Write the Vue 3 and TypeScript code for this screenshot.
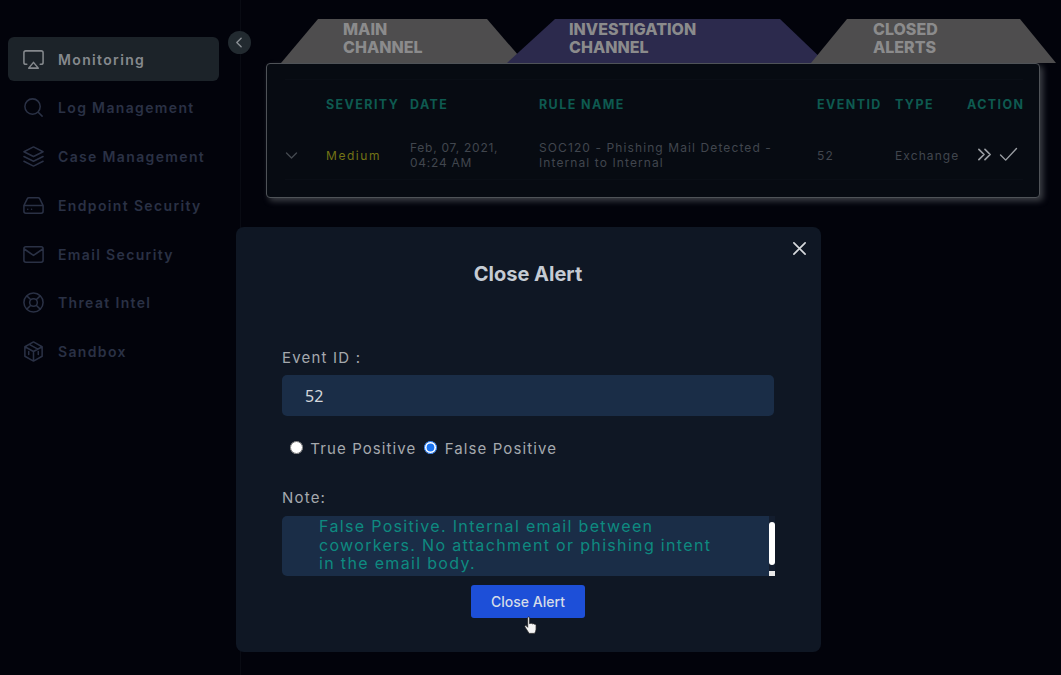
<script setup lang="ts">
interface NavItem {
  label: string;
  icon: string;
  active?: boolean;
}

// one path per icon, subpaths for the separate strokes
const navItems: NavItem[] = [
  {
    label: 'Monitoring',
    active: true,
    icon: 'M5 17H4a2 2 0 0 1-2-2V5a2 2 0 0 1 2-2h16a2 2 0 0 1 2 2v10a2 2 0 0 1-2 2h-1M12 15l5 6H7z',
  },
  { label: 'Log Management', icon: 'M11 3a8 8 0 1 0 0 16a8 8 0 1 0 0-16zM21 21l-4.35-4.35' },
  { label: 'Case Management', icon: 'M12 2L2 7l10 5l10-5zM2 17l10 5l10-5M2 12l10 5l10-5' },
  {
    label: 'Endpoint Security',
    icon: 'M22 12H2M5.45 5.11L2 12v6a2 2 0 0 0 2 2h16a2 2 0 0 0 2-2v-6l-3.45-6.89A2 2 0 0 0 16.76 4H7.24a2 2 0 0 0-1.79 1.11zM6 16h.01M10 16h.01',
  },
  {
    label: 'Email Security',
    icon: 'M4 4h16a2 2 0 0 1 2 2v12a2 2 0 0 1-2 2H4a2 2 0 0 1-2-2V6a2 2 0 0 1 2-2zM22 6l-10 7L2 6',
  },
  {
    label: 'Threat Intel',
    icon: 'M12 2a10 10 0 1 0 0 20a10 10 0 1 0 0-20zM12 8a4 4 0 1 0 0 8a4 4 0 1 0 0-8zM4.93 4.93l4.24 4.24M14.83 14.83l4.24 4.24M14.83 9.17l4.24-4.24M4.93 19.07l4.24-4.24',
  },
  {
    label: 'Sandbox',
    icon: 'M12 2l9 5v10l-9 5l-9-5V7zM3 7l9 5l9-5M12 12v10M7.5 4.5l9 5M7 12v3M17 12v3',
  },
];

const noteLines: string[] = [
  'False Positive. Internal email between',
  'coworkers. No attachment or phishing intent',
  'in the email body.',
];
</script>

<template>
  <div class="page">
    <aside class="sidebar">
      <a v-for="item in navItems" :key="item.label" class="nav-item" :class="{ active: item.active }">
        <svg class="nav-icon" viewBox="0 0 24 24" fill="none" stroke="currentColor" stroke-width="1.6" stroke-linecap="round" stroke-linejoin="round">
          <path :d="item.icon" />
        </svg>
        <span>{{ item.label }}</span>
      </a>
      <button class="collapse-btn" aria-label="Collapse">
        <svg viewBox="0 0 24 24" fill="none" stroke="currentColor" stroke-width="2.6" stroke-linecap="round" stroke-linejoin="round">
          <path d="M15 4l-8 8l8 8" />
        </svg>
      </button>
    </aside>

    <main class="content">
      <div class="tabs">
        <div class="tab tab-main"><span>MAIN<br />CHANNEL</span></div>
        <div class="tab tab-investigation"><span>INVESTIGATION<br />CHANNEL</span></div>
        <div class="tab tab-closed"><span>CLOSED<br />ALERTS</span></div>
      </div>

      <section class="panel">
        <div class="row head">
          <div></div>
          <div>SEVERITY</div>
          <div>DATE</div>
          <div>RULE NAME</div>
          <div>EVENTID</div>
          <div>TYPE</div>
          <div class="action-head">ACTION</div>
        </div>
        <div class="row body">
          <svg class="chevron" viewBox="0 0 24 24" fill="none" stroke="currentColor" stroke-width="2.2" stroke-linecap="round" stroke-linejoin="round">
            <path d="M4 8l8 8l8-8" />
          </svg>
          <div class="severity">Medium</div>
          <div class="date">Feb, 07, 2021,<br />04:24 AM</div>
          <div>SOC120 - Phishing Mail Detected -<br />Internal to Internal</div>
          <div>52</div>
          <div>Exchange</div>
          <div class="actions">
            <svg viewBox="0 0 16 16" fill="none" stroke="currentColor" stroke-width="1.8" stroke-linecap="round" stroke-linejoin="round" class="act-forward">
              <path d="M2 2.500l5.500 5.500L2 13.500M8.500 2.500L14 8l-5.500 5.500" />
            </svg>
            <svg viewBox="0 0 20 16" fill="none" stroke="currentColor" stroke-width="1.5" stroke-linecap="round" stroke-linejoin="round" class="act-check">
              <path d="M1.500 8.500L7 14L18.500 1.500" />
            </svg>
          </div>
        </div>
      </section>
    </main>

    <div class="modal">
      <button class="modal-close" aria-label="Close">
        <svg viewBox="0 0 16 16" fill="none" stroke="currentColor" stroke-width="1.8" stroke-linecap="round">
          <path d="M2 2l12 12M14 2L2 14" />
        </svg>
      </button>
      <h2 class="modal-title">Close Alert</h2>

      <label class="field-label">Event ID :</label>
      <input class="event-input" type="text" value="52" readonly />

      <div class="radios">
        <label><input type="radio" name="verdict" /> True Positive</label>
        <label><input type="radio" name="verdict" checked /> False Positive</label>
      </div>

      <label class="field-label note-label">Note:</label>
      <div class="note">
        <div v-for="line in noteLines" :key="line">{{ line }}</div>
        <div class="note-track">
          <span class="note-thumb"></span>
          <span class="note-grip"></span>
        </div>
      </div>

      <div class="modal-actions">
        <button class="submit">Close Alert</button>
        <!-- mouse pointer caught in the capture -->
        <svg class="hand" viewBox="0 0 14 20">
          <path
            d="M4 1.500c0-1 2-1 2 0V8l.5 0c1-.6 2-.4 2.500.2c.8-.4 1.800-.2 2.200.4c1-.2 1.800.4 1.800 1.400V14c0 2-1 3-1.500 4.500H5.500L1 11.500c-.6-1.200.8-2 1.800-1L4 12z"
            fill="#f4f4f4"
            stroke="#222"
            stroke-width="0.8"
          />
        </svg>
      </div>
    </div>
  </div>
</template>

<style>
html,
body {
  margin: 0;
  background: #02030b;
}
</style>

<style scoped>
.page {
  display: flex;
  position: relative;
  width: 1061px;
  height: 675px;
  overflow: hidden;
  background: #02030b;
  font-family: Inter, "Liberation Sans", sans-serif;
}

.sidebar {
  position: relative;
  flex: 0 0 241px;
  box-sizing: border-box;
  padding: 37px 21px 0 8px;
  border-right: 1px solid #090b13;
  display: flex;
  flex-direction: column;
  gap: 4.75px;
}
.nav-item {
  display: flex;
  align-items: center;
  gap: 13px;
  height: 44px;
  flex: none;
  padding-left: 14px;
  border-radius: 6px;
  color: #2a3145;
  font-size: 14px;
  font-weight: 600;
  letter-spacing: 1.35px;
}
.nav-item.active {
  background: #1c2329;
  color: #85898d;
}
.nav-icon {
  width: 23px;
  height: 23px;
  flex: none;
}
.collapse-btn {
  position: absolute;
  left: 228px;
  top: 31px;
  width: 23px;
  height: 23px;
  padding: 5px;
  border: none;
  border-radius: 50%;
  background: #222a30;
  color: #8a8f94;
}
.collapse-btn svg {
  display: block;
  width: 13px;
  height: 13px;
}

.content {
  flex: 1;
  padding: 19px 21px 0 25px;
  min-width: 0;
}
.tabs {
  display: flex;
  height: 44px;
  margin-left: 15px;
}
.tab {
  height: 44px;
  flex: none;
  font-size: 16px;
  font-weight: 800;
  line-height: 18px;
  color: #8b8b8c;
}
.tab span {
  display: block;
  padding-top: 1px;
}
.tab-main {
  width: 244px;
  background: #4e4d4e;
  clip-path: polygon(37px 0, 206px 0, 244px 44px, 0 44px);
}
.tab-main span {
  padding-left: 62px;
}
.tab-investigation {
  width: 319px;
  margin-left: -18px;
  background: #2c2a4d;
  clip-path: polygon(48px 0, 273px 0, 319px 44px, 0 44px);
}
.tab-investigation span {
  padding-left: 62px;
}
.tab-closed {
  width: 245px;
  margin-left: -15px;
  background: #4e4d4e;
  clip-path: polygon(36px 0, 209px 0, 245px 44px, 0 44px);
}
.tab-closed span {
  padding-left: 62px;
}

.panel {
  box-sizing: border-box;
  width: 774px;
  height: 135px;
  padding: 15px 16px 0 18px;
  background: #070b12;
  border: 1px solid #4f5358;
  border-radius: 4px;
  box-shadow: 3px 3px 6px rgba(150, 155, 160, 0.4);
}
.row {
  display: grid;
  grid-template-columns: 41px 84px 129px 278px 78px 72px 1fr;
  align-items: center;
}
.head {
  height: 49px;
  border-top: 1px solid #0a0e16;
  box-sizing: border-box;
  color: #0e5a50;
  font-size: 12.5px;
  font-weight: 700;
  letter-spacing: 1.4px;
}
.body {
  height: 52px;
  padding-top: 3px;
  border-bottom: 1px solid #0a0e16;
  box-sizing: border-box;
  color: #41464e;
  font-size: 12px;
  line-height: 15px;
  letter-spacing: 1.1px;
}
.chevron {
  width: 15px;
  height: 15px;
  margin-left: -1px;
  color: #44494f;
}
.severity {
  color: #737315;
  letter-spacing: 1.55px;
}
.date {
  letter-spacing: 0.75px;
}
.actions {
  display: flex;
  align-items: center;
  gap: 7px;
  margin: -2px 0 0 10px;
  color: #9a9ea3;
}
.act-forward {
  width: 15px;
  height: 15px;
}
.act-check {
  width: 19px;
  height: 15px;
}

.modal {
  position: absolute;
  left: 236px;
  top: 227px;
  box-sizing: border-box;
  width: 585px;
  height: 425px;
  padding: 0 47px 0 46px;
  background: #0f1724;
  border-radius: 8px;
  color: #a5a9ae;
}
.modal-close {
  position: absolute;
  top: 14px;
  right: 14px;
  width: 15px;
  height: 15px;
  padding: 0;
  border: none;
  background: none;
  color: #d6d9dd;
}
.modal-close svg {
  display: block;
}
.modal-title {
  margin: 0;
  padding-top: 35px;
  height: 121px;
  box-sizing: border-box;
  text-align: center;
  font-size: 20px;
  font-weight: 700;
  line-height: 24px;
  color: #c5cbd3;
}
.field-label {
  display: block;
  font-size: 15px;
  line-height: 20px;
  letter-spacing: 1.2px;
}
.event-input {
  display: block;
  box-sizing: border-box;
  width: 100%;
  height: 41px;
  margin-top: 7px;
  padding: 0 23px;
  border: none;
  border-radius: 5px;
  outline: none;
  background: #1a2d47;
  color: #d4d7dc;
  font: 16px "Noto Sans", sans-serif;
}
.radios {
  display: flex;
  gap: 8px;
  margin: 22px 0 0 8px;
  font-size: 15px;
  line-height: 22px;
  letter-spacing: 1.1px;
}
.radios input {
  width: 13px;
  height: 13px;
  margin: 0 2px 0 0;
  accent-color: #1a73f0;
}
.note-label {
  margin-top: 28px;
}
.note {
  position: relative;
  box-sizing: border-box;
  height: 60px;
  margin: 8px -1px 0 0;
  padding: 1px 0 0 37px;
  background: #1a2d47;
  border-radius: 5px 0 0 5px;
  color: #0e8a80;
  font-size: 16px;
  line-height: 18.5px;
  letter-spacing: 1.33px;
  overflow: hidden;
}
.note-track {
  position: absolute;
  top: 0;
  right: 0;
  bottom: 0;
  width: 6px;
  background: #131d2e;
}
.note-thumb {
  position: absolute;
  top: 6px;
  right: 0;
  width: 6px;
  height: 43px;
  border-radius: 3px;
  background: #fff;
}
.note-grip {
  position: absolute;
  bottom: 0;
  right: 0;
  width: 6px;
  height: 5px;
  background: #e8e8e8;
}
.modal-actions {
  position: relative;
  display: flex;
  justify-content: center;
  margin-top: 9px;
}
.submit {
  width: 114px;
  height: 33px;
  border: none;
  border-radius: 3px;
  background: #1d4fd8;
  color: #d5dce8;
  font-family: inherit;
  font-size: 14px;
  font-weight: 500;
}
.hand {
  position: absolute;
  left: 242px;
  top: 31px;
  width: 13px;
  height: 19px;
}
</style>
